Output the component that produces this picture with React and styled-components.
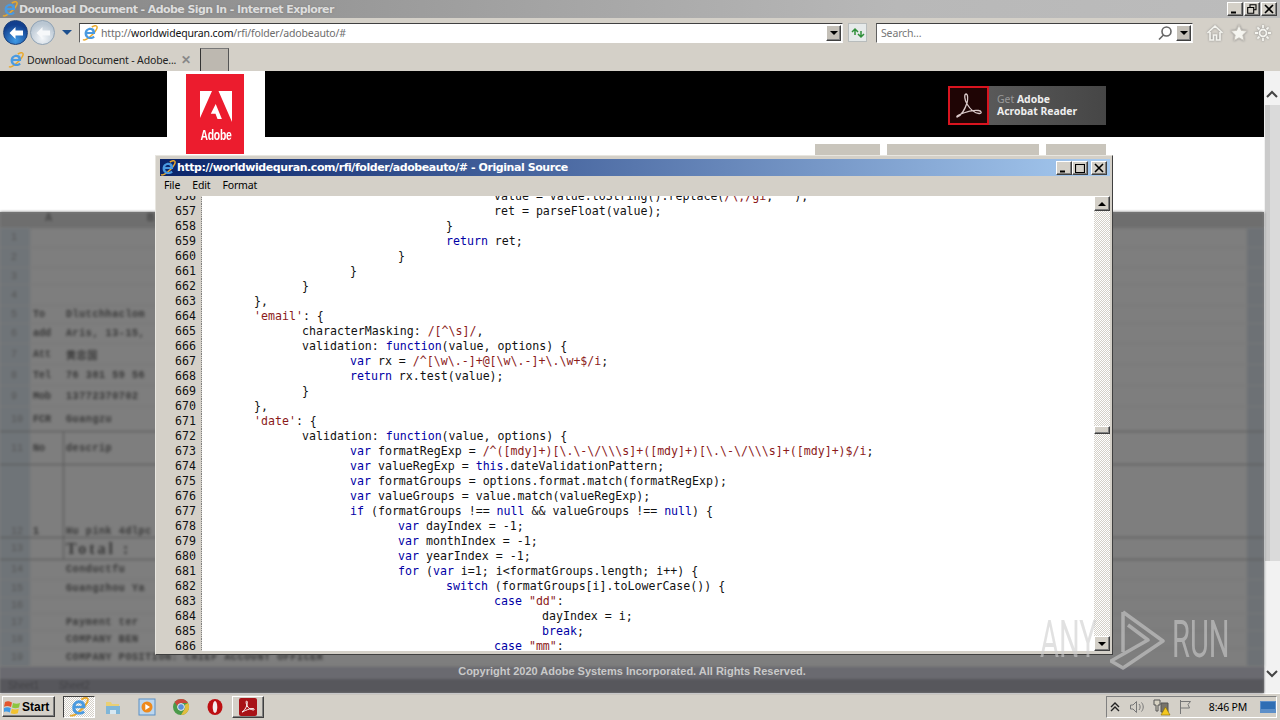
import React from "react";
import styled, { createGlobalStyle } from "styled-components";

const Global = createGlobalStyle`
  html, body { margin: 0; padding: 0; background: #d4d0c8; }
  * { box-sizing: border-box; }
  svg { flex: none; }
`;

const UI_FONT = `"Noto Sans", "DejaVu Sans", sans-serif`;
const MONO_FONT = `"DejaVu Sans Mono", "Liberation Mono", monospace`;
const checker = `repeating-conic-gradient(#d4d0c8 0 25%, #fff 0 50%) 0 0 / 2px 2px`;
const raised = `
  background: #d4d0c8;
  border: 1px solid;
  border-color: #fff #404040 #404040 #fff;
  box-shadow: inset -1px -1px 0 #808080;
`;

const Screen = styled.div`
  position: relative;
  width: 1280px;
  height: 720px;
  overflow: hidden;
  display: flex;
  flex-direction: column;
  font-family: ${UI_FONT};
  font-size: 10.5px;
  letter-spacing: -0.15px;
  color: #000;
`;

/* ---------- browser chrome ---------- */

const TitleBar = styled.div`
  height: 18px;
  flex: none;
  display: flex;
  align-items: center;
  gap: 1px;
  padding: 0 3px 0 2px;
  background: linear-gradient(90deg, #858585, #b8b8b8 70%, #bcbcbc);
`;
const TitleText = styled.div`
  flex: 1;
  font: bold 11px "DejaVu Sans", sans-serif;
  letter-spacing: -0.58px;
  color: #dedede;
  text-shadow: 0 0 2px #777;
  white-space: nowrap;
`;
const CaptionGroup = styled.div`
  display: flex;
  gap: ${({ $gap }) => $gap}px;
`;
const CaptionButton = styled.div`
  ${raised}
  width: 16px;
  height: 14px;
  display: flex;
  align-items: center;
  justify-content: center;
`;

const AddressRow = styled.div`
  height: 28px;
  flex: none;
  display: flex;
  align-items: center;
  padding: 1px 3px 0;
  background: #d4d0c8;
`;
const NavCircle = styled.div`
  width: ${({ $size }) => $size}px;
  height: ${({ $size }) => $size}px;
  flex: none;
  border-radius: 50%;
  display: flex;
  align-items: center;
  justify-content: center;
  margin-right: 2px;
  border: 1px solid ${({ $off }) => ($off ? "#8fa2b4" : "#1a3f78")};
  background: ${({ $off }) =>
    $off
      ? "radial-gradient(circle at 50% 75%, #f4f7fa, #b9c6d2 70%)"
      : "radial-gradient(circle at 50% 85%, #3f9ae6, #123f8e 70%)"};
`;
const NavDrop = styled.div`
  width: 0;
  height: 0;
  margin: 0 7px 0 5px;
  border-left: 5px solid transparent;
  border-right: 5px solid transparent;
  border-top: 5px solid #1c4f8e;
`;
const InsetField = styled.div`
  height: 20px;
  flex: none;
  width: ${({ $w }) => $w}px;
  display: flex;
  align-items: center;
  gap: 3px;
  padding: 0 1px 0 2px;
  background: #fff;
  border: 1px solid;
  border-color: #404040 #f4f4f4 #fff #606060;
`;
const UrlText = styled.div`
  flex: 1;
  color: #6d6d6d;
  white-space: nowrap;
  b {
    font-weight: 400;
    color: #111;
  }
`;
const SearchText = styled.div`
  flex: 1;
  padding-left: 2px;
  color: #777;
`;
const DropButton = styled.div`
  ${raised}
  width: 15px;
  height: 16px;
  flex: none;
  display: flex;
  align-items: center;
  justify-content: center;
  background: #c4c0b8;
  &::after {
    content: "";
    border-left: 4px solid transparent;
    border-right: 4px solid transparent;
    border-top: 4px solid #000;
  }
`;
const RefreshButton = styled.div`
  width: 19px;
  height: 19px;
  flex: none;
  margin: 0 9px 0 5px;
  display: flex;
  align-items: center;
  justify-content: center;
  background: #e6eaea;
  border: 1px solid #b8bcbc;
`;
const ToolIcons = styled.div`
  display: flex;
  gap: 6px;
  margin-left: 13px;
  filter: drop-shadow(0 0 1px #8a8a8a);
`;

const TabRow = styled.div`
  height: 25px;
  flex: none;
  display: flex;
  align-items: flex-end;
  background: #d4d0c8;
`;
const Tab = styled.div`
  width: 196px;
  height: 24px;
  display: flex;
  align-items: center;
  gap: 3px;
  padding: 1px 5px 0 8px;
  white-space: nowrap;
  color: #222;
`;
const TabLabel = styled.div`
  flex: 1;
`;
const TabClose = styled.div`
  font: bold 12px "Liberation Sans", sans-serif;
  color: #888;
`;
const NewTab = styled.div`
  width: 29px;
  height: 23px;
  margin-left: 4px;
  background: #bdb8b0;
  border: 1px solid;
  border-color: #777 #555 #222 #333;
  border-bottom: 0;
`;

/* ---------- page ---------- */

const Viewport = styled.div`
  flex: 1;
  min-height: 0;
  display: flex;
`;
const Page = styled.div`
  flex: 1;
  min-width: 0;
  display: flex;
  flex-direction: column;
`;
const BlackBar = styled.div`
  height: 66px;
  flex: none;
  display: flex;
  background: #000;
  padding-left: 167px;
  padding-right: 158px;
`;
const LogoColumn = styled.div`
  width: 98px;
  background: #fff;
  padding: 3px 21px 0 19px;
`;
const LogoTile = styled.div`
  position: relative;
  z-index: 1;
  width: 58px;
  height: 80px;
  background: #ec1c2e;
  display: flex;
  flex-direction: column;
  align-items: center;
  padding: 17px 0 0 2px;
`;
const LogoWord = styled.div`
  margin-top: 3px;
  font: bold 14px "Liberation Sans", sans-serif;
  color: #fff;
  transform: scaleX(0.74);
  letter-spacing: -0.3px;
`;
const ReaderBadge = styled.div`
  margin: 15px 0 0 auto;
  width: 158px;
  height: 39px;
  display: flex;
  align-items: center;
  background: linear-gradient(90deg, #5f5f5f, #464646);
`;
const ReaderIcon = styled.div`
  width: 41px;
  height: 39px;
  display: flex;
  align-items: center;
  justify-content: center;
  background: #1f0505;
  border: 2.5px solid #d8141f;
`;
const ReaderText = styled.div`
  margin: -2px 0 0 8px;
  font: bold 10.4px/12px "Noto Sans", sans-serif;
  letter-spacing: 0;
  color: #eee;
  span {
    color: #999;
    font-weight: 400;
  }
`;
const WhiteStrip = styled.div`
  height: 75px;
  flex: none;
  display: flex;
  justify-content: flex-end;
  gap: 7px;
  background: #fff;
  padding: 7px 158px 0 0;
`;
const NavTab = styled.div`
  width: ${({ $w }) => $w}px;
  height: 30px;
  background: #c9c5bc;
`;

const Sheet = styled.div`
  position: relative;
  flex: 1;
  min-height: 0;
  display: flex;
  flex-direction: column;
  background: #7e7e7e;
`;
const SheetHead = styled.div`
  height: 16px;
  flex: none;
  display: flex;
  gap: 95px;
  padding-left: 45px;
  background: #6e6e6e;
  font: bold 10px "Liberation Sans", sans-serif;
  color: #444;
  filter: blur(1.5px);
`;
const SheetBody = styled.div`
  flex: 1;
  min-height: 0;
  overflow: hidden;
  display: flex;
  background: linear-gradient(90deg, #6f7478 30px, transparent 30px, transparent 1247px, #6d7175 1247px);
  filter: blur(1.4px);
`;
const SheetRows = styled.div`
  flex: 1;
  display: flex;
  flex-direction: column;
`;
const SheetRow = styled.div`
  height: ${({ $h }) => $h}px;
  flex: none;
  display: grid;
  grid-template-columns: 32px 32px 1fr;
  align-items: ${({ $low }) => ($low ? "end" : "center")};
  border-bottom: 1px solid ${({ $ruled }) => ($ruled ? "#555" : "#787878")};
  color: #383838;
  font: bold 10px "Liberation Mono", monospace;
  letter-spacing: 0;
  white-space: nowrap;
`;
const RowNum = styled.div`
  padding-left: 11px;
  font-weight: 400;
  color: #555;
`;
const RowKey = styled.div`
  height: 100%;
  display: flex;
  align-items: ${({ $low }) => ($low ? "flex-end" : "center")};
  padding-left: 1px;
  border-right: 1px solid ${({ $ruled }) => ($ruled ? "#555" : "transparent")};
`;
const RowVal = styled.div`
  padding-left: 2px;
  font-size: ${({ $big }) => ($big ? 16 : 10)}px;
  letter-spacing: ${({ $big }) => ($big ? 3 : 0.6)}px;
  font-family: ${({ $big }) => ($big ? `"Liberation Serif", serif` : `"Liberation Mono", "Noto Sans CJK SC", monospace`)};
`;
const SheetTabs = styled.div`
  height: 26px;
  flex: none;
  display: flex;
  align-items: flex-end;
  gap: 20px;
  padding: 0 0 2px 8px;
  background: linear-gradient(180deg, #6a6a70 0 12px, #57575c 12px);
  font: 10px "Liberation Sans", sans-serif;
  color: #454549;
  filter: blur(1.2px);
`;
const FooterNote = styled.div`
  position: absolute;
  left: 0;
  right: 0;
  bottom: 16px;
  text-align: center;
  font: bold 11px "Liberation Sans", sans-serif;
  letter-spacing: 0;
  color: #c9c9c9;
`;

const PageScroll = styled.div`
  width: 16px;
  flex: none;
  display: flex;
  flex-direction: column;
  align-items: center;
  padding: 19px 0 15px;
  background: #f2f2f2;
`;
const ScrollGrip = styled.div`
  width: 16px;
  height: 456px;
  margin-top: 7px;
  background: linear-gradient(90deg, #f2f2f2 1px, #cbcbcb 1px, #cbcbcb 6px, #dadada 6px);
`;
const ChevronEnd = styled.div`
  margin-top: auto;
  display: flex;
`;

/* ---------- source window ---------- */

const SourceWindow = styled.div`
  position: absolute;
  left: 155px;
  top: 155px;
  width: 958px;
  height: 500px;
  display: flex;
  flex-direction: column;
  padding: 3px 2px 3px 4px;
  background: #d4d0c8;
  border: 1px solid;
  border-color: #e8e6e0 #404040 #404040 #e8e6e0;
`;
const SourceTitle = styled.div`
  height: 17px;
  flex: none;
  display: flex;
  align-items: center;
  gap: 1px;
  padding: 0 3px 0 0;
  background: linear-gradient(90deg, #0a246a, #a6caf0);
`;
const SourceTitleText = styled.div`
  flex: 1;
  font: bold 11px "DejaVu Sans", sans-serif;
  letter-spacing: -0.43px;
  color: #fff;
  white-space: nowrap;
`;
const CloseGap = styled.div`
  margin-left: 2px;
`;
const MenuBar = styled.div`
  height: 20px;
  flex: none;
  display: flex;
  align-items: center;
  gap: 12px;
  padding: 0 0 2px 4px;
`;
const SourceBody = styled.div`
  flex: 1;
  min-height: 0;
  display: flex;
  background: #fff;
`;
const CodeClip = styled.div`
  flex: 1;
  min-width: 0;
  overflow: hidden;
`;
const CodeList = styled.div`
  margin-top: -7px;
`;
const CodeRow = styled.div`
  height: 15px;
  display: flex;
  font: 11.6px/15px ${MONO_FONT};
  letter-spacing: 0;
  color: #111;
`;
const LineNo = styled.div`
  width: 42px;
  flex: none;
  padding-right: 5px;
  text-align: right;
  background: #d4d0c8;
  border-right: 1px dotted #808080;
`;
const LineText = styled.div`
  padding-left: 4px;
  white-space: pre;
  tab-size: 48px;
`;
const Kw = styled.span`
  color: #0000a6;
`;
const Str = styled.span`
  color: #8b1a1a;
`;
const ScrollTrack = styled.div`
  width: 16px;
  flex: none;
  display: flex;
  flex-direction: column;
  background: ${checker};
`;
const ScrollThumb = styled.div`
  ${raised}
  width: 16px;
  height: 8px;
  margin-top: ${({ $top }) => $top}px;
`;
const ScrollBtn = styled.div`
  ${raised}
  width: 16px;
  height: 15px;
  flex: none;
  margin-top: ${({ $end }) => ($end ? "auto" : "0")};
  display: flex;
  align-items: center;
  justify-content: center;
  &::after {
    content: "";
    border-left: 4px solid transparent;
    border-right: 4px solid transparent;
    ${({ $end }) => ($end ? "border-top" : "border-bottom")}: 4px solid #000;
  }
`;

/* ---------- taskbar ---------- */

const Taskbar = styled.div`
  height: 27px;
  flex: none;
  display: flex;
  align-items: center;
  padding: 0 3px 1px 2px;
  background: #d4d0c8;
  border-top: 1px solid #fff;
`;
const StartButton = styled.div`
  ${raised}
  width: 53px;
  height: 21px;
  display: flex;
  align-items: center;
  gap: 1px;
  padding-left: 1px;
  font: bold 12px "Liberation Sans", sans-serif;
  letter-spacing: 0;
`;
const TaskSlot = styled.div`
  width: ${({ $w }) => $w}px;
  height: 22px;
  flex: none;
  display: flex;
  align-items: center;
  justify-content: center;
  margin-left: ${({ $ml }) => $ml || 0}px;
  ${({ $kind }) =>
    $kind === "pressed" &&
    `background: ${checker}; border: 1px solid; border-color: #404040 #fff #fff #404040;`}
  ${({ $kind }) => $kind === "raised" && raised}
`;
const Tray = styled.div`
  margin-left: auto;
  width: 171px;
  height: 22px;
  display: flex;
  align-items: center;
  border: 1px solid;
  border-color: #808080 #fff #fff #808080;
`;
const TrayIcon = styled.div`
  width: 16px;
  height: 16px;
  flex: none;
  margin-right: ${({ $mr }) => $mr}px;
  display: flex;
  align-items: center;
  justify-content: center;
`;
const Clock = styled.div`
  width: 60px;
  text-align: center;
  margin-right: 2px;
`;

/* ---------- watermark ---------- */

const Watermark = styled.div`
  position: absolute;
  left: 1040px;
  top: 608px;
  display: flex;
  align-items: center;
  color: rgba(205, 205, 205, 0.6);
  pointer-events: none;
`;
const MarkWord = styled.div`
  width: ${({ $w }) => $w}px;
  font: 400 52px/64px Roboto, sans-serif;
  letter-spacing: 0;
  transform: scaleX(0.56);
  transform-origin: 0 50%;
  white-space: nowrap;
`;

/* ---------- drawings ---------- */

const IeIcon = ({ size = 16 }) => (
  <svg width={size} height={size} viewBox="0 0 16 16" fill="none">
    <path d="M1 14.500C3 16 7 13 11 9c3.500-3.500 5-7 3.500-8C13.500.3 11.500 1 9.800 2" stroke="#e9a92c" strokeWidth="1.500" />
    <path d="M13 9H5.200c0 3 3.800 4 6.300 1.800l1.300 1.700C9 15.500 2.600 14 2.600 8.500 2.600 3.500 8 1.300 11.300 3.600 13 4.900 13.300 7 13 9zM5.300 7h5c0-2.600-4.600-2.600-5 0z" fill="#4a9ae0" />
  </svg>
);

const BackArrow = ({ color }) => (
  <svg width="14" height="12" viewBox="0 0 14 12">
    <path d="M6.500 0L0.500 6l6 6V8.500H14v-5H6.500z" fill={color} />
  </svg>
);

const Glyph = ({ d, w = 16, h = 16, stroke = "#f2f2ee", fill = "none", sw = 1.6 }) => (
  <svg width={w} height={h} viewBox={`0 0 ${w} ${h}`} fill={fill} stroke={stroke} strokeWidth={sw}>
    <path d={d} />
  </svg>
);

const WinMin = () => <Glyph w={10} h={10} d="M1 8.500h5" stroke="#000" sw={2} />;
const WinMax = () => <Glyph w={10} h={10} d="M.5 1.500h9v8h-9zM.5 1.500h9" stroke="#000" sw={1.2} />;
const WinRestore = () => <Glyph w={10} h={10} d="M3 3V.700h6v5H7M.700 3.500h6v5.800h-6zM.700 3.500h6" stroke="#000" sw={1.1} />;
const WinClose = () => <Glyph w={10} h={10} d="M1 1l8 8M9 1l-8 8" stroke="#000" sw={1.6} />;

const AcrobatMark = ({ size = 30, color = "#d9c9c9" }) => (
  <svg width={size} height={size} viewBox="0 0 30 30" fill="none" stroke={color} strokeWidth="1.300">
    <path d="M3 26c4-1 8-8 10-14 1-4 1-9-1-9-2 .3-1.500 6 1 10 3 5 7 9 12 9.500 3 .3 3-2.500-.5-3-5-.5-11 .8-15 2.500-3 1.300-7.500 3-6.500 4z" />
  </svg>
);

const AdobeMark = () => (
  <svg width="33" height="33" viewBox="0 0 33 33" fill="#fff">
    <path d="M0 0h12L0 27zM18.500 0H32v31zM15.700 13l6.200 15h-4.400l-2-5.200h-4.700z" />
  </svg>
);

const WindowsFlag = () => (
  <svg width="17" height="17" viewBox="0 0 17 17">
    <path d="M1 4c2-1 4-1 7 .5L7 9C4.500 7.800 2.500 7.800 0 8.800z" fill="#e4572e" />
    <path d="M9 5c2.500 1 4.500 1 7 0l-1 4.500c-2.500 1-4.500 1-7 0z" fill="#8cc63f" />
    <path d="M0 10c2.500-1 4.500-1 6.800.2L5.800 14.500c-2.300-1.200-4.300-1.200-6.800 0z" fill="#3f9ae6" />
    <path d="M7.800 10.700c2.500 1 4.500 1 7 0l-1 4.500c-2.500 1-4.500 1-7 0z" fill="#f2c230" />
  </svg>
);

const FolderIcon = () => (
  <svg width="18" height="18" viewBox="0 0 18 18">
    <path d="M2 4h5l1 2h7v10H2z" fill="#e9cf74" />
    <path d="M2 8h14v8H2z" fill="#7fb6d8" />
    <path d="M6 12h6v4H6z" fill="#d7e8f2" />
  </svg>
);

const MediaIcon = () => (
  <svg width="18" height="18" viewBox="0 0 18 18">
    <rect x="1" y="1" width="16" height="16" fill="#bcd6ee" stroke="#5b8fc4" />
    <circle cx="9" cy="9" r="5.500" fill="#ee8a1d" />
    <path d="M7.300 6v6l4.700-3z" fill="#fff" />
  </svg>
);

const ChromeIcon = () => (
  <svg width="18" height="18" viewBox="0 0 18 18">
    <circle cx="9" cy="9" r="8" fill="#4b9a4a" />
    <path d="M9 1a8 8 0 0 1 7 4H9a4 4 0 0 0-3.800 2.700L2.600 4A8 8 0 0 1 9 1z" fill="#c9463c" />
    <path d="M16 5a8 8 0 0 1-7 12l3.300-5.500A4 4 0 0 0 12.500 7z" fill="#e3bd3f" />
    <circle cx="9" cy="9" r="3.400" fill="#5a8fd8" stroke="#eee" />
  </svg>
);

const OperaIcon = () => (
  <svg width="16" height="18" viewBox="0 0 16 18">
    <ellipse cx="8" cy="9" rx="7.500" ry="8" fill="#bd0f12" />
    <ellipse cx="8" cy="9" rx="2.300" ry="6" fill="#f4eeee" />
  </svg>
);

const SpeakerIcon = () => (
  <svg width="16" height="16" viewBox="0 0 16 16" fill="none" stroke="#777">
    <path d="M1.500 6v4h2.500l3.500 3.500v-11L4 6zM10 5c1.500 1.800 1.500 4.200 0 6M12.500 3.500c2.300 2.600 2.300 6.400 0 9" />
  </svg>
);

const NetworkIcon = () => (
  <svg width="18" height="18" viewBox="0 0 18 18">
    <path d="M1 2h6v5H5v6H3V7H1z" fill="#d9d4c4" stroke="#555" />
    <path d="M8 5h7v9H8z" fill="#77736a" stroke="#555" />
    <path d="M12.500 9l4.500 8H8z" fill="#f4c820" stroke="#8a6d00" strokeWidth=".6" />
  </svg>
);

const FlagIcon = () => (
  <svg width="16" height="16" viewBox="0 0 16 16" fill="none" stroke="#777">
    <path d="M3.500 1v14M3.500 2.500h10l-2.500 3 1.500 3.500h-9" />
  </svg>
);

const DesktopIcon = () => (
  <svg width="16" height="14" viewBox="0 0 16 14">
    <rect x="0" y="1" width="16" height="12" fill="#5d8fc8" />
    <rect x="1" y="2" width="14" height="7" fill="#2f6eb4" />
  </svg>
);

const PlayLogo = () => (
  <svg width="62" height="64" viewBox="0 0 62 64" fill="none" stroke="currentColor" strokeWidth="3.500" strokeLinejoin="round">
    <path d="M13 4L53 33 13 60 1 53 38 32 18 17M13 4V44" />
  </svg>
);

/* ---------- data ---------- */

const codeLines = [
  `\t\t\t\t\t\tvalue = value.toString().replace(/\\,/gi, "");`,
  `\t\t\t\t\t\tret = parseFloat(value);`,
  `\t\t\t\t\t}`,
  `\t\t\t\t\treturn ret;`,
  `\t\t\t\t}`,
  `\t\t\t}`,
  `\t\t}`,
  `\t},`,
  `\t'email': {`,
  `\t\tcharacterMasking: /[^\\s]/,`,
  `\t\tvalidation: function(value, options) {`,
  `\t\t\tvar rx = /^[\\w\\.-]+@[\\w\\.-]+\\.\\w+$/i;`,
  `\t\t\treturn rx.test(value);`,
  `\t\t}`,
  `\t},`,
  `\t'date': {`,
  `\t\tvalidation: function(value, options) {`,
  `\t\t\tvar formatRegExp = /^([mdy]+)[\\.\\-\\/\\\\\\s]+([mdy]+)[\\.\\-\\/\\\\\\s]+([mdy]+)$/i;`,
  `\t\t\tvar valueRegExp = this.dateValidationPattern;`,
  `\t\t\tvar formatGroups = options.format.match(formatRegExp);`,
  `\t\t\tvar valueGroups = value.match(valueRegExp);`,
  `\t\t\tif (formatGroups !== null && valueGroups !== null) {`,
  `\t\t\t\tvar dayIndex = -1;`,
  `\t\t\t\tvar monthIndex = -1;`,
  `\t\t\t\tvar yearIndex = -1;`,
  `\t\t\t\tfor (var i=1; i<formatGroups.length; i++) {`,
  `\t\t\t\t\tswitch (formatGroups[i].toLowerCase()) {`,
  `\t\t\t\t\t\tcase "dd":`,
  `\t\t\t\t\t\t\tdayIndex = i;`,
  `\t\t\t\t\t\t\tbreak;`,
  `\t\t\t\t\t\tcase "mm":`,
];

const tokenRe = /(\/\^.*\/i|\/\[.*\]\/|\/\\,\/gi|'[^']*'|"[^"]*")|\b(var|function|return|if|for|switch|case|break|this|null)\b/g;

const highlight = (line) => {
  const parts = [];
  let last = 0;
  for (const m of line.matchAll(tokenRe)) {
    parts.push(line.slice(last, m.index));
    parts.push(m[1] ? <Str key={m.index}>{m[0]}</Str> : <Kw key={m.index}>{m[0]}</Kw>);
    last = m.index + m[0].length;
  }
  parts.push(line.slice(last));
  return parts;
};

const sheetRows = [
  { n: "1", h: 20 },
  { n: "2", h: 20 },
  { n: "3", h: 17 },
  { n: "4", h: 21 },
  { n: "5", k: "To", v: "Dlutchhaclom", h: 18 },
  { n: "6", k: "add", v: "Aris, 13-15,", h: 20 },
  { n: "7", k: "Att", v: "黄忠国", h: 21 },
  { n: "8", k: "Tel", v: "76 381 59 56", h: 21 },
  { n: "9", k: "Mob", v: "13772370702", h: 21 },
  { n: "10", k: "FCR", v: "Guangzu", h: 25, ruled: true },
  { n: "11", k: "No", v: "   descrip", h: 33, ruled: true, cols: true },
  { n: "12", k: "1", v: "Hu pink 4dlpc", h: 73, ruled: true, cols: true, low: true },
  { n: "13", k: "", v: "Total :", big: true, h: 22, ruled: true, cols: true },
  { n: "14", k: "", v: "Conductfu", h: 20 },
  { n: "15", k: "", v: "Guangzhou Ya", h: 18 },
  { n: "16", h: 16 },
  { n: "17", k: "", v: "Payment ter", h: 17 },
  { n: "18", k: "", v: "COMPANY BEN", h: 18 },
  { n: "19", k: "", v: "COMPANY POSITION: CHIEF ACCOUNT OFFICER", h: 18 },
];

const App = () => (
  <Screen>
    <Global />
    <TitleBar>
      <IeIcon />
      <TitleText>Download Document - Adobe Sign In - Internet Explorer</TitleText>
      <CaptionGroup $gap={1}>
        <CaptionButton><WinMin /></CaptionButton>
        <CaptionButton><WinRestore /></CaptionButton>
        <CaptionButton><WinClose /></CaptionButton>
      </CaptionGroup>
    </TitleBar>

    <AddressRow>
      <NavCircle $size={25}><BackArrow color="#fff" /></NavCircle>
      <NavCircle $size={25} $off><BackArrow color="#f6f8fa" /></NavCircle>
      <NavDrop />
      <InsetField $w={764}>
        <IeIcon />
        <UrlText>http://<b>worldwidequran.com</b>/rfi/folder/adobeauto/#</UrlText>
        <DropButton />
      </InsetField>
      <RefreshButton>
        <Glyph w={14} h={12} d="M1 5l3-3 3 3M4 2v6M7 7l3 3 3-3M10 10V4" stroke="#2f8f3a" sw={1.5} />
      </RefreshButton>
      <InsetField $w={317}>
        <SearchText>Search...</SearchText>
        <Glyph d="M9.500 2a4.500 4.500 0 1 1 0 9 4.500 4.500 0 0 1 0-9zM6.500 10L2 14.500" stroke="#666" sw={1.6} />
        <DropButton />
      </InsetField>
      <ToolIcons>
        <Glyph w={18} h={18} d="M1.500 9L9 2l7.500 7M4 8v8h3.500v-5h3v5H14V8" stroke="#f5f5f0" />
        <Glyph w={18} h={18} d="M9 1l2.400 5.400 5.600.6-4.200 3.900 1.200 5.800L9 13.800 4 16.700l1.200-5.800L1 7l5.600-.6z" fill="#f5f5f0" stroke="#c8c4bc" sw={1} />
        <Glyph w={18} h={18} d="M9 5.500a3.500 3.500 0 1 1 0 7 3.500 3.500 0 0 1 0-7zM9 1v3M9 14v3M1 9h3M14 9h3M3.400 3.400l2.100 2.100M12.500 12.500l2.100 2.100M14.600 3.400l-2.100 2.100M5.500 12.500l-2.100 2.100" stroke="#f5f5f0" sw={1.8} />
      </ToolIcons>
    </AddressRow>

    <TabRow>
      <Tab>
        <IeIcon />
        <TabLabel>Download Document - Adobe...</TabLabel>
        <TabClose>✕</TabClose>
      </Tab>
      <NewTab />
    </TabRow>

    <Viewport>
      <Page>
        <BlackBar>
          <LogoColumn>
            <LogoTile>
              <AdobeMark />
              <LogoWord>Adobe</LogoWord>
            </LogoTile>
          </LogoColumn>
          <ReaderBadge>
            <ReaderIcon><AcrobatMark /></ReaderIcon>
            <ReaderText>
              <span>Get </span>Adobe<br />Acrobat Reader
            </ReaderText>
          </ReaderBadge>
        </BlackBar>
        <WhiteStrip>
          <NavTab $w={65} />
          <NavTab $w={152} />
          <NavTab $w={60} />
        </WhiteStrip>
        <Sheet>
          <SheetHead><span>A</span><span>B</span></SheetHead>
          <SheetBody>
            <SheetRows>
              {sheetRows.map((row) => (
                <SheetRow key={row.n} $h={row.h} $ruled={row.ruled} $low={row.low}>
                  <RowNum>{row.n}</RowNum>
                  <RowKey $ruled={row.cols} $low={row.low}>{row.k}</RowKey>
                  <RowVal $big={row.big}>{row.v}</RowVal>
                </SheetRow>
              ))}
            </SheetRows>
          </SheetBody>
          <SheetTabs><span>Sheet1</span><span>Sheet2</span></SheetTabs>
          <FooterNote>Copyright 2020 Adobe Systems Incorporated. All Rights Reserved.</FooterNote>
        </Sheet>
      </Page>
      <PageScroll>
        <Glyph w={12} h={8} d="M1 7l5-5 5 5" stroke="#444" sw={2} />
        <ScrollGrip />
        <ChevronEnd>
          <Glyph w={12} h={8} d="M1 1l5 5 5-5" stroke="#444" sw={2} />
        </ChevronEnd>
      </PageScroll>
    </Viewport>

    <Taskbar>
      <StartButton><WindowsFlag />Start</StartButton>
      <TaskSlot $w={32} $ml={8} $kind="pressed"><IeIcon size={20} /></TaskSlot>
      <TaskSlot $w={34} $ml={1}><FolderIcon /></TaskSlot>
      <TaskSlot $w={34}><MediaIcon /></TaskSlot>
      <TaskSlot $w={34}><ChromeIcon /></TaskSlot>
      <TaskSlot $w={34}><OperaIcon /></TaskSlot>
      <TaskSlot $w={32} $kind="raised">
        <svg width="18" height="18" viewBox="0 0 18 18">
          <rect width="18" height="18" rx="2" fill="#a81217" />
          <path d="M3 14c2-1 4-4 5-7 .500-2 .500-4-.300-4-1 .2-.700 3 .500 5 1.500 2.500 3.500 3.500 6 4 1.500 0 1.500-1.500-.300-1.500-2.500 0-5 1-7 1.800-2 .8-4 2-3.900 1.700z" fill="none" stroke="#fff" />
        </svg>
      </TaskSlot>
      <Tray>
        <TrayIcon $mr={6}><Glyph w={10} h={10} d="M1 5l4-4 4 4M1 9l4-4 4 4" stroke="#222" sw={1.4} /></TrayIcon>
        <TrayIcon $mr={9}><SpeakerIcon /></TrayIcon>
        <TrayIcon $mr={7}><NetworkIcon /></TrayIcon>
        <TrayIcon $mr={5}><FlagIcon /></TrayIcon>
        <Clock>8:46 PM</Clock>
        <TrayIcon $mr={0}><DesktopIcon /></TrayIcon>
      </Tray>
    </Taskbar>

    <SourceWindow>
      <SourceTitle>
        <IeIcon />
        <SourceTitleText>http://worldwidequran.com/rfi/folder/adobeauto/# - Original Source</SourceTitleText>
        <CaptionGroup $gap={0}>
          <CaptionButton><WinMin /></CaptionButton>
          <CaptionButton><WinMax /></CaptionButton>
        </CaptionGroup>
        <CloseGap><CaptionButton><WinClose /></CaptionButton></CloseGap>
      </SourceTitle>
      <MenuBar>
        <span>File</span>
        <span>Edit</span>
        <span>Format</span>
      </MenuBar>
      <SourceBody>
        <CodeClip>
          <CodeList>
            {codeLines.map((line, i) => (
              <CodeRow key={i}>
                <LineNo>{656 + i}</LineNo>
                <LineText>{highlight(line)}</LineText>
              </CodeRow>
            ))}
          </CodeList>
        </CodeClip>
        <ScrollTrack>
          <ScrollBtn />
          <ScrollThumb $top={215} />
          <ScrollBtn $end />
        </ScrollTrack>
      </SourceBody>
    </SourceWindow>

    <Watermark>
      <MarkWord $w={70}>ANY</MarkWord>
      <PlayLogo />
      <MarkWord $w={60}>RUN</MarkWord>
    </Watermark>
  </Screen>
);

export default App;
